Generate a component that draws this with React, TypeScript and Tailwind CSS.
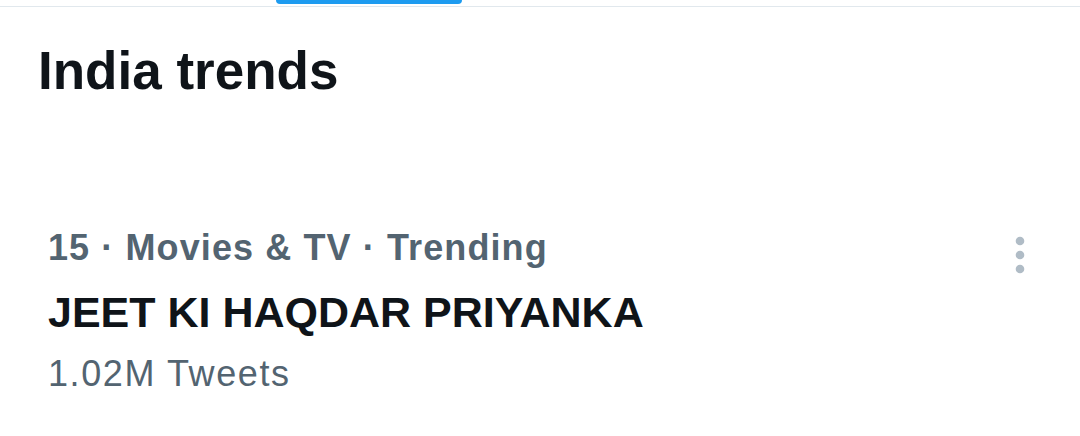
import React from "react";

export default function App() {
  return (
    <div className="w-[1080px] h-[436px] bg-white overflow-hidden" style={{ fontFamily: '"Liberation Sans", Arial, sans-serif' }}>
      <div className="relative h-[7px] border-b border-[#e1e8ed]">
        <div className="absolute left-[276px] top-0 w-[186px] h-[4px] rounded-b-full bg-[#1d9bf0]" />
      </div>
      <div className="pl-[38px] pt-[32px]">
        <h1 className="text-[53px] leading-[64px] font-bold text-[#0f1419]">India trends</h1>
      </div>
      <div className="mt-[123px] flex justify-between pl-[48px] pr-[50px]">
        <div className="flex flex-col">
          <div className="text-[36px] leading-[44px] font-bold text-[#536471] tracking-[1.1px]">15 · Movies &amp; TV · Trending</div>
          <div className="mt-[14px] text-[43px] leading-[56px] font-bold text-[#0f1419]">JEET KI HAQDAR PRIYANKA</div>
          <div className="mt-[12px] text-[36px] leading-[44px] text-[#536471] tracking-[1.6px]">1.02M Tweets</div>
        </div>
        <svg width="20" height="44" viewBox="0 0 20 44" className="mt-[10px]">
          <circle cx="10" cy="5" r="4.3" fill="#b0bcc6" />
          <circle cx="10" cy="19" r="4.3" fill="#b0bcc6" />
          <circle cx="10" cy="33" r="4.3" fill="#b0bcc6" />
        </svg>
      </div>
    </div>
  );
}
